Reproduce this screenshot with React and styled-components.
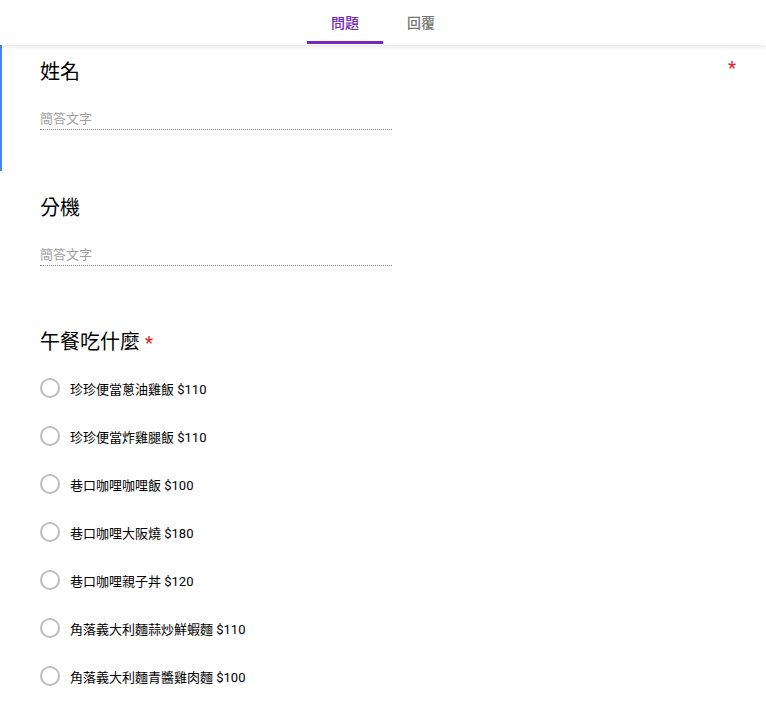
import React from 'react';
import styled, { createGlobalStyle } from 'styled-components';

const GlobalStyle = createGlobalStyle`
  body {
    margin: 0;
    background: #ffffff;
    font-family: Roboto, "Noto Sans CJK TC", sans-serif;
    color: #000000;
  }
`;

const Header = styled.div`
  height: 45px;
  display: flex;
  justify-content: center;
  background: #ffffff;
  box-shadow: 0 2px 4px rgba(0, 0, 0, 0.1);
  position: relative;
  z-index: 2;
`;

const Tab = styled.div`
  width: 76px;
  display: flex;
  align-items: center;
  justify-content: center;
  font-size: 14px;
  font-weight: 500;
  color: ${({ $active }) => ($active ? '#7627bb' : '#757575')};
  box-sizing: border-box;
  border-bottom: 3px solid ${({ $active }) => ($active ? '#7627bb' : 'transparent')};
  margin-bottom: 1px;
  padding-top: 2px;
`;

const Form = styled.div`
  display: flex;
  flex-direction: column;
`;

const Section = styled.div`
  padding: ${({ $top }) => $top}px 30px 41px 38px;
  margin-bottom: 10px;
  border-left: 2px solid ${({ $focused }) => ($focused ? '#4285f4' : 'transparent')};
`;

const TitleRow = styled.div`
  display: flex;
  justify-content: space-between;
  align-items: flex-start;
`;

const Title = styled.div`
  font-size: 20px;
  line-height: 28px;
  color: #000000;
`;

const Star = styled.span`
  color: #e8262b;
  font-size: 18px;
  font-weight: 500;
  line-height: 20px;
  margin-left: ${({ $inline }) => ($inline ? '5px' : '0')};
  margin-top: 0;
`;

const ShortInput = styled.div`
  width: 352px;
  margin-top: 23px;
  font-size: 13px;
  line-height: 20px;
  color: #9e9e9e;
  border-bottom: 1px dotted #80868b;
`;

const Options = styled.div`
  margin-top: 8px;
  display: flex;
  flex-direction: column;
`;

const Option = styled.label`
  height: 48px;
  display: flex;
  align-items: center;
  gap: 10px;
  font-size: 13px;
  color: #000000;
`;

const Radio = styled.span`
  width: 20px;
  height: 20px;
  box-sizing: border-box;
  border: 2px solid #bdbdbd;
  border-radius: 50%;
  flex-shrink: 0;
`;

const lunchOptions = [
  '珍珍便當蔥油雞飯 $110',
  '珍珍便當炸雞腿飯 $110',
  '巷口咖哩咖哩飯 $100',
  '巷口咖哩大阪燒 $180',
  '巷口咖哩親子丼 $120',
  '角落義大利麵蒜炒鮮蝦麵 $110',
  '角落義大利麵青醬雞肉麵 $100',
];

const App = () => {
  return (
    <>
      <GlobalStyle />
      <Header>
        <Tab $active>問題</Tab>
        <Tab>回覆</Tab>
      </Header>
      <Form>
        <Section $focused $top={13}>
          <TitleRow>
            <Title>姓名</Title>
            <Star>*</Star>
          </TitleRow>
          <ShortInput>簡答文字</ShortInput>
        </Section>
        <Section $top={13}>
          <TitleRow>
            <Title>分機</Title>
          </TitleRow>
          <ShortInput>簡答文字</ShortInput>
        </Section>
        <Section $top={11}>
          <Title>
            午餐吃什麼<Star $inline>*</Star>
          </Title>
          <Options>
            {lunchOptions.map((item) => (
              <Option key={item}>
                <Radio />
                {item}
              </Option>
            ))}
          </Options>
        </Section>
      </Form>
    </>
  );
};

export default App;
